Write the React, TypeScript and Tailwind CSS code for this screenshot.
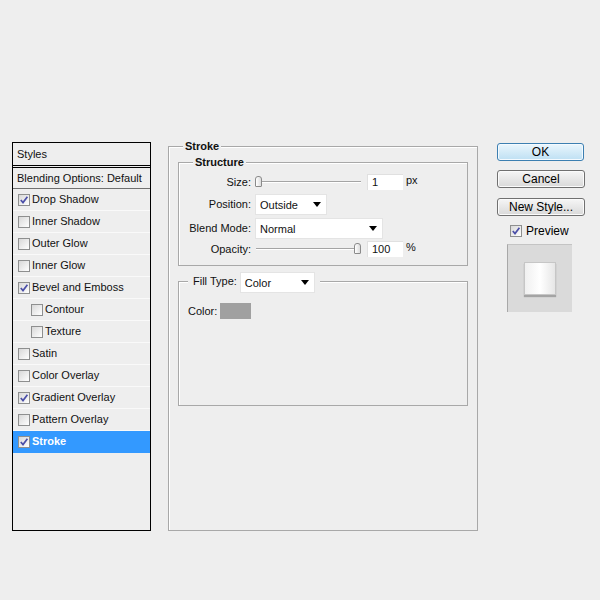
import React from "react";

function Check({ checked }: { checked?: boolean }) {
  return (
    <span className="w-[12px] h-[12px] shrink-0 border border-[#8e8f8f] bg-linear-to-br from-[#d8d8d8] to-[#ffffff] flex items-center justify-center">
      {checked && (
        <svg width="10" height="10" viewBox="0 0 10 10">
          <path d="M1.8 5 L4 7.6 L8.4 1.8" fill="none" stroke="#4b4fa8" strokeWidth="1.7" />
        </svg>
      )}
    </span>
  );
}

function Arrow() {
  return (
    <svg width="8" height="5" viewBox="0 0 8 5">
      <polygon points="0,0 8,0 4,5" fill="#000" />
    </svg>
  );
}

function Dropdown({ w, text }: { w: string; text: string }) {
  return (
    <div className={`${w} h-[21px] bg-white border border-[#e4e4e4] flex items-center justify-between pl-[4px] pr-[5px]`}>
      <span className="pt-[1px]">{text}</span>
      <Arrow />
    </div>
  );
}

function Slider({ pos }: { pos: string }) {
  return (
    <div className="relative w-[106px] h-[16px] flex items-center pl-[1px]">
      <div className="w-full h-[2px] border-t border-[#a4a4a4] border-b border-b-white" />
      <div className={`absolute ${pos} top-[2px] w-[7px] h-[11px] border border-[#8a8a8a] rounded-t-[3px] rounded-b-[1px] bg-linear-to-r from-[#ffffff] to-[#dcdcdc]`} />
    </div>
  );
}

function Input({ value }: { value: string }) {
  return (
    <div className="w-[36px] h-[16px] bg-white border-t border-l border-[#e0e0e0] flex items-center pl-[4px]">
      {value}
    </div>
  );
}

const rows: { label: string; checked?: boolean; indent?: boolean; active?: boolean }[] = [
  { label: "Drop Shadow", checked: true },
  { label: "Inner Shadow" },
  { label: "Outer Glow" },
  { label: "Inner Glow" },
  { label: "Bevel and Emboss", checked: true },
  { label: "Contour", indent: true },
  { label: "Texture", indent: true },
  { label: "Satin" },
  { label: "Color Overlay" },
  { label: "Gradient Overlay", checked: true },
  { label: "Pattern Overlay" },
  { label: "Stroke", checked: true, active: true },
];

export default function App() {
  return (
    <div className="w-[600px] h-[600px] bg-[#eeeeee] flex items-start pl-[12px] pt-[142px] text-[11px] leading-[13px] text-[#111] font-['Liberation_Sans',Arial,sans-serif]">
      {/* Styles list */}
      <div className="w-[139px] h-[389px] border border-black flex flex-col shrink-0">
        <div className="h-[23px] border-b border-black flex items-center pl-[4px]">Styles</div>
        <div className="h-[1px]" />
        <div className="h-[22px] border-t border-black border-b border-b-[#707070] flex items-center pl-[4px]">
          Blending Options: Default
        </div>
        {rows.map((r) => (
          <div
            key={r.label}
            className={`h-[22px] border-b flex items-center gap-[2px] ${r.indent ? "pl-[18px]" : "pl-[5px]"} ${
              r.active ? "bg-[#3399ff] border-[#3399ff] text-white font-bold" : "border-[#f9f9f9]"
            }`}
          >
            <Check checked={r.checked} />
            <span>{r.label}</span>
          </div>
        ))}
      </div>

      {/* Stroke panel */}
      <div className="ml-[17px] mt-[4px] w-[310px] h-[385px] border border-[#a8a8a8] shadow-[inset_1px_1px_0_#ffffff] flex flex-col shrink-0">
        <span className="-mt-[7px] ml-[14px] px-[2px] bg-[#eeeeee] self-start font-bold">Stroke</span>

        <div className="mt-[9px] mx-[9px] h-[104px] border border-[#a8a8a8] shadow-[inset_1px_1px_0_#ffffff] flex flex-col">
          <span className="-mt-[7px] ml-[14px] px-[2px] bg-[#eeeeee] self-start font-bold">Structure</span>

          <div className="mt-[5px] h-[16px] flex items-center">
            <span className="w-[72px] text-right">Size:</span>
            <div className="ml-[4px]">
              <Slider pos="left-[0px]" />
            </div>
            <div className="ml-[6px]">
              <Input value="1" />
            </div>
            <span className="ml-[3px] -mt-[3px]">px</span>
          </div>

          <div className="mt-[4px] h-[21px] flex items-center">
            <span className="w-[72px] text-right">Position:</span>
            <div className="ml-[4px]">
              <Dropdown w="w-[72px]" text="Outside" />
            </div>
          </div>

          <div className="mt-[3px] h-[21px] flex items-center">
            <span className="w-[72px] text-right">Blend Mode:</span>
            <div className="ml-[4px]">
              <Dropdown w="w-[128px]" text="Normal" />
            </div>
          </div>

          <div className="mt-[2px] h-[16px] flex items-center">
            <span className="w-[72px] text-right">Opacity:</span>
            <div className="ml-[4px]">
              <Slider pos="left-[99px]" />
            </div>
            <div className="ml-[6px]">
              <Input value="100" />
            </div>
            <span className="ml-[3px] -mt-[3px]">%</span>
          </div>
        </div>

        <div className="mt-[15px] mx-[9px] h-[125px] border border-[#a8a8a8] shadow-[inset_1px_1px_0_#ffffff] flex flex-col">
          <div className="-mt-[10px] ml-[9px] px-[5px] bg-[#eeeeee] self-start h-[21px] flex items-center">
            <span className="-mt-[3px]">Fill Type:</span>
            <div className="ml-[3px]">
              <Dropdown w="w-[75px]" text="Color" />
            </div>
          </div>
          <div className="mt-[10px] ml-[9px] flex items-center">
            <span>Color:</span>
            <div className="ml-[3px] w-[31px] h-[16px] bg-[#a0a0a0]" />
          </div>
        </div>
      </div>

      {/* Buttons */}
      <div className="ml-[19px] mt-[1px] flex flex-col text-[12px] leading-[14px] text-black">
        <button className="w-[87px] h-[18px] rounded-[3px] border border-[#3c7fb1] bg-linear-to-b from-[#eaf6fd] to-[#bee0f3] shadow-[inset_0_0_0_1px_#f4faff] flex items-center justify-center">
          OK
        </button>
        <button className="mt-[9px] w-[88px] h-[18px] rounded-[3px] border border-[#707070] bg-linear-to-b from-[#f6f6f6] to-[#d9d9d9] shadow-[inset_0_0_0_1px_#fbfbfb] flex items-center justify-center">
          Cancel
        </button>
        <button className="mt-[10px] w-[88px] h-[18px] rounded-[3px] border border-[#707070] bg-linear-to-b from-[#f6f6f6] to-[#d9d9d9] shadow-[inset_0_0_0_1px_#fbfbfb] flex items-center justify-center">
          New Style...
        </button>
        <div className="mt-[8px] ml-[13px] h-[14px] flex items-center gap-[4px]">
          <Check checked />
          <span>Preview</span>
        </div>
        <div className="mt-[6px] ml-[10px] w-[65px] h-[68px] bg-[#dadada] border-l border-l-[#a8a8a8] border-t border-t-[#c4c4c4] flex items-center justify-center">
          <div className="w-[32px] h-[33px] bg-linear-to-r from-[#f0f0f0] via-white to-[#e6e6e6] border border-[#c6c6c6] shadow-[0_2px_1px_#a4a4a4]" />
        </div>
      </div>
    </div>
  );
}
